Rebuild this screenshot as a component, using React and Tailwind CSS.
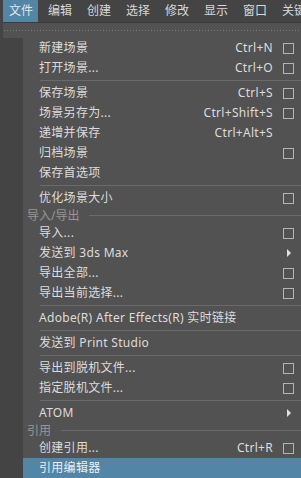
import React from "react";

const menus = ["文件", "编辑", "创建", "选择", "修改", "显示", "窗口", "关键帧"];

const items = [
  { t: "item", label: "新建场景", sc: "Ctrl+N", box: true },
  { t: "item", label: "打开场景...", sc: "Ctrl+O", box: true },
  { t: "sep" },
  { t: "item", label: "保存场景", sc: "Ctrl+S", box: true },
  { t: "item", label: "场景另存为...", sc: "Ctrl+Shift+S", box: true },
  { t: "item", label: "递增并保存", sc: "Ctrl+Alt+S" },
  { t: "item", label: "归档场景", box: true },
  { t: "item", label: "保存首选项" },
  { t: "sep" },
  { t: "item", label: "优化场景大小", box: true },
  { t: "sec", label: "导入/导出" },
  { t: "item", label: "导入...", box: true },
  { t: "item", label: "发送到 3ds Max", arrow: true },
  { t: "item", label: "导出全部...", box: true },
  { t: "item", label: "导出当前选择...", box: true },
  { t: "sep" },
  { t: "item", label: "Adobe(R) After Effects(R) 实时链接" },
  { t: "sep" },
  { t: "item", label: "发送到 Print Studio" },
  { t: "sep" },
  { t: "item", label: "导出到脱机文件...", box: true },
  { t: "item", label: "指定脱机文件...", box: true },
  { t: "sep" },
  { t: "item", label: "ATOM", arrow: true },
  { t: "sec", label: "引用" },
  { t: "item", label: "创建引用...", sc: "Ctrl+R", box: true },
  { t: "item", label: "引用编辑器", active: true },
];

function Row({ it }) {
  if (it.t === "sep") {
    return (
      <div className="h-[5px] flex items-center">
        <div className="ml-[17px] flex-1 h-px bg-[#6a6a6a]" />
      </div>
    );
  }
  if (it.t === "sec") {
    return (
      <div className="h-[15px] flex items-center pl-[4px] text-[#969696]">
        <span className="leading-none">{it.label}</span>
        <div className="ml-[10px] flex-1 h-px bg-[#6a6a6a]" />
      </div>
    );
  }
  return (
    <div
      className={
        "h-[20px] flex items-center pl-[16px] pr-[7px] tracking-[0.3px] " +
        (it.active ? "bg-[#5285a6] text-[#eeeeee]" : "text-[#dcdcdc]")
      }
    >
      <span className="flex-1 whitespace-nowrap leading-none">{it.label}</span>
      {it.sc && <span className="whitespace-nowrap leading-none">{it.sc}</span>}
      <div className="ml-[10px] w-[11px] h-[11px] flex items-center justify-center">
        {it.box && <div className="w-[11px] h-[11px] border border-[#b4b4b4]" />}
        {it.arrow && (
          <div className="w-0 h-0 border-y-[4px] border-y-transparent border-l-[4px] border-l-[#e2e2e2] ml-[1px]" />
        )}
      </div>
    </div>
  );
}

export default function App() {
  return (
    <div
      className="w-[301px] h-[478px] overflow-hidden bg-[#444444] text-[12px]"
      style={{ fontFamily: '"Noto Sans", "Noto Sans CJK SC", sans-serif' }}
    >
      <div className="h-[22px] flex items-stretch pl-[3px] gap-[4px] whitespace-nowrap">
        {menus.map((m, i) => (
          <div
            key={m}
            className={
              "w-[35px] shrink-0 pl-[6px] flex items-center leading-none " +
              (i === 0 ? "bg-[#5285a6] text-[#e6e6e6]" : "text-[#d8d8d8]")
            }
          >
            {m}
          </div>
        ))}
      </div>
      <div className="ml-[3px] h-[456px] bg-[#525252] border-t border-[#3c3c3c] flex flex-col">
        <div className="h-[16px] flex items-center pl-[1px]">
          <div className="flex-1 h-px bg-[repeating-linear-gradient(to_right,#7c7c7c_0_1px,transparent_1px_3px)]" />
        </div>
        <div className="flex-1 flex">
          <div className="w-[20px] bg-[#444444]" />
          <div className="flex-1 flex flex-col">
            {items.map((it, i) => (
              <Row key={i} it={it} />
            ))}
          </div>
        </div>
      </div>
    </div>
  );
}
